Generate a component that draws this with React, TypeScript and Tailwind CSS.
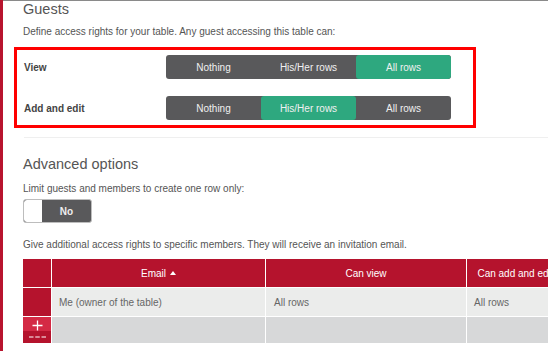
import React from "react";

const font = { fontFamily: "'Liberation Sans', Arial, sans-serif" };

type SegProps = { options: string[]; active: number };

const Segmented: React.FC<SegProps> = ({ options, active }) => (
  <div className="flex h-[24px] w-[285px] rounded-[3px] bg-[#59595b] overflow-hidden">
    {options.map((o, i) => (
      <div
        key={o}
        className={
          "flex-1 flex items-center justify-center text-[10px] text-[#f0f0f0] " +
          (i === active ? "bg-[#2ea87f] rounded-[3px]" : "")
        }
      >
        {o}
      </div>
    ))}
  </div>
);

// add-row button in the table's first column
const AddButton = () => (
  <div className="flex flex-col">
    <div className="h-[14px] bg-[#d42a45] flex items-end justify-center">
      <svg width="11" height="11" viewBox="0 0 11 11">
        <path d="M5.5 0.5v10M0.5 5.5h10" stroke="#fff" strokeWidth="1.3" />
      </svg>
    </div>
    <div className="flex-1 bg-[#b5132d] flex items-start justify-center pt-[5px]">
      <svg width="17" height="2" viewBox="0 0 17 2">
        <path d="M0 1h4.5M6.25 1h4.5M12.5 1h4.5" stroke="#fff" strokeWidth="1.2" />
      </svg>
    </div>
  </div>
);

export default function App() {
  const opts = ["Nothing", "His/Her rows", "All rows"];

  return (
    <div className="w-[548px] h-[351px] overflow-hidden bg-white flex" style={font}>
      {/* left accent */}
      <div className="w-[3px] shrink-0 bg-[#b8142e]" />

      <div className="flex-1 flex flex-col border-t border-[#8a8a8a] pl-[20px] text-[#555]">
        {/* Guests */}
        <h2 className="mt-[1px] h-[14px] leading-[14px] text-[14.5px] text-[#555]">Guests</h2>
        <p className="mt-[8px] h-[16px] leading-[16px] text-[10px]">
          Define access rights for your table. Any guest accessing this table can:
        </p>

        <div className="-ml-[9px] mt-[7px] w-[462px] border-[3px] border-[#ff0000] pl-[7px] pt-[5px] pb-[5px] flex flex-col gap-[17px]">
          <div className="flex items-center">
            <span className="w-[142px] text-[10px] font-bold text-[#444]">View</span>
            <Segmented options={opts} active={2} />
          </div>
          <div className="flex items-center">
            <span className="w-[142px] text-[10px] font-bold text-[#444]">Add and edit</span>
            <Segmented options={opts} active={1} />
          </div>
        </div>

        <div className="mt-[9px] ml-[1px] h-px bg-[#efefef]" />

        {/* Advanced options */}
        <h2 className="mt-[19px] h-[14px] leading-[14px] text-[14.5px] text-[#555]">Advanced options</h2>
        <p className="mt-[10px] h-[16px] leading-[16px] text-[10px]">
          Limit guests and members to create one row only:
        </p>
        <div className="mt-[2px] flex h-[24px] w-[69px] rounded-[3px] border border-[#bdbdbd] bg-[#59595b] overflow-hidden">
          <div className="w-[18px] bg-white rounded-l-[3px]" />
          <div className="flex-1 flex items-center justify-center text-[10px] font-semibold text-[#eee]">No</div>
        </div>
        <p className="mt-[14px] h-[16px] leading-[16px] text-[10px]">
          Give additional access rights to specific members. They will receive an invitation email.
        </p>

        {/* Members table */}
        <div className="mt-[6px] grid grid-cols-[28px_213px_200px_97px] grid-rows-[28px_28px_26px] gap-[1px] w-[541px] shrink-0 text-[10px]">
          <div className="bg-[#b5132d]" />
          <div className="bg-[#b5132d] text-white flex items-center justify-center gap-[4px]">
            Email
            <span className="w-0 h-0 border-l-[3.5px] border-r-[3.5px] border-b-[4px] border-l-transparent border-r-transparent border-b-white" />
          </div>
          <div className="bg-[#b5132d] text-white flex items-center justify-center">Can view</div>
          <div className="bg-[#b5132d] text-white flex items-center justify-center whitespace-nowrap">
            Can add and edit
          </div>

          <div className="bg-[#b5132d]" />
          <div className="bg-[#ebeceb] text-[#666] flex items-center pl-[7px]">Me (owner of the table)</div>
          <div className="bg-[#ebeceb] text-[#666] flex items-center pl-[8px]">All rows</div>
          <div className="bg-[#ebeceb] text-[#666] flex items-center pl-[7px]">All rows</div>

          <AddButton />
          <div className="bg-[#d7d8d9]" />
          <div className="bg-[#d7d8d9]" />
          <div className="bg-[#d7d8d9]" />
        </div>
      </div>
    </div>
  );
}
